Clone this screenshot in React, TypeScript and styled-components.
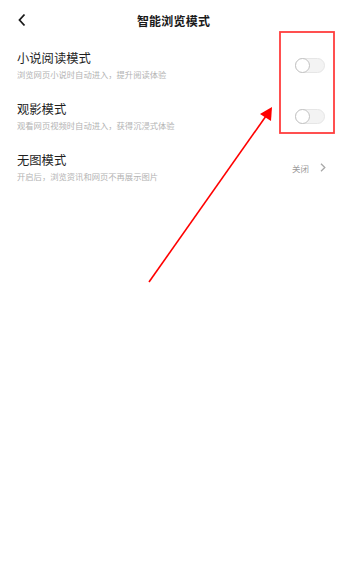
import React from "react";
import styled, { createGlobalStyle } from "styled-components";

const GlobalStyle = createGlobalStyle`
  html, body {
    margin: 0;
    padding: 0;
    background: #ffffff;
    font-family: "Noto Sans CJK SC", "Noto Sans", sans-serif;
  }
`;

const Page = styled.div`
  position: relative;
  width: 347px;
  height: 567px;
  overflow: hidden;
  background: #ffffff;
`;

const Header = styled.div`
  position: relative;
  height: 40px;
  display: flex;
  align-items: center;
  justify-content: center;
`;

const BackButton = styled.div`
  position: absolute;
  left: 15px;
  top: 12px;
  width: 14px;
  height: 16px;
  display: flex;
  align-items: center;
  justify-content: center;
`;

const Title = styled.div`
  font-size: 12px;
  font-weight: 600;
  color: #1a1a1a;
  letter-spacing: 0.2px;
`;

const Row = styled.div`
  height: 51px;
  display: flex;
  align-items: center;
  justify-content: space-between;
  padding: 0 22px 0 17px;
`;

const TextBlock = styled.div`
  display: flex;
  flex-direction: column;
  gap: 2px;
`;

const RowTitle = styled.div`
  font-size: 12.3px;
  line-height: 16px;
  color: #1f1f1f;
`;

const RowSub = styled.div`
  font-size: 8.3px;
  line-height: 13px;
  color: #b3b3b3;
`;

const Toggle = styled.div<{ $on?: boolean }>`
  position: relative;
  width: 30px;
  height: 15px;
  box-sizing: border-box;
  border-radius: 8px;
  background: ${(p) => (p.$on ? "#3c7cff" : "#f3f3f3")};
  border: 1px solid #e6e6e6;
`;

const Knob = styled.div`
  position: absolute;
  left: -1px;
  top: -1px;
  width: 15px;
  height: 15px;
  box-sizing: border-box;
  border-radius: 50%;
  background: #ffffff;
  border: 1.6px solid #c2c2c2;
`;

const Value = styled.div`
  display: flex;
  align-items: center;
  gap: 11px;
  margin-right: -1px;
  font-size: 8.5px;
  color: #9a9a9a;
`;

const Annotation = styled.svg`
  position: absolute;
  left: 0;
  top: 0;
  pointer-events: none;
`;

type Item = { title: string; sub: string; kind: "toggle" | "value"; value?: string };

const items: Item[] = [
  { title: "小说阅读模式", sub: "浏览网页小说时自动进入，提升阅读体验", kind: "toggle" },
  { title: "观影模式", sub: "观看网页视频时自动进入，获得沉浸式体验", kind: "toggle" },
  { title: "无图模式", sub: "开启后，浏览资讯和网页不再展示图片", kind: "value", value: "关闭" },
];

export default function App() {
  return (
    <Page>
      <GlobalStyle />
      <Header>
        <BackButton>
          <svg width="8" height="14" viewBox="0 0 8 14">
            <path d="M6.5 1.5 L1.5 7 L6.5 12.5" fill="none" stroke="#1a1a1a" strokeWidth="1.8" />
          </svg>
        </BackButton>
        <Title>智能浏览模式</Title>
      </Header>
      {items.map((it) => (
        <Row key={it.title}>
          <TextBlock>
            <RowTitle>{it.title}</RowTitle>
            <RowSub>{it.sub}</RowSub>
          </TextBlock>
          {it.kind === "toggle" ? (
            <Toggle>
              <Knob />
            </Toggle>
          ) : (
            <Value>
              {it.value}
              <svg width="6" height="9" viewBox="0 0 6 9">
                <path d="M1 0.8 L4.8 4.5 L1 8.2" fill="none" stroke="#a8a8a8" strokeWidth="1.3" />
              </svg>
            </Value>
          )}
        </Row>
      ))}
      <Annotation width="347" height="567" viewBox="0 0 347 567">
        <rect x="280" y="32" width="54" height="101" fill="none" stroke="#ff3d3d" strokeWidth="1.8" />
        <line x1="149" y1="282" x2="266" y2="116" stroke="#ff0000" strokeWidth="1.6" />
        <polygon points="272,107 271,121 260,114" fill="#ff0000" />
      </Annotation>
    </Page>
  );
}
